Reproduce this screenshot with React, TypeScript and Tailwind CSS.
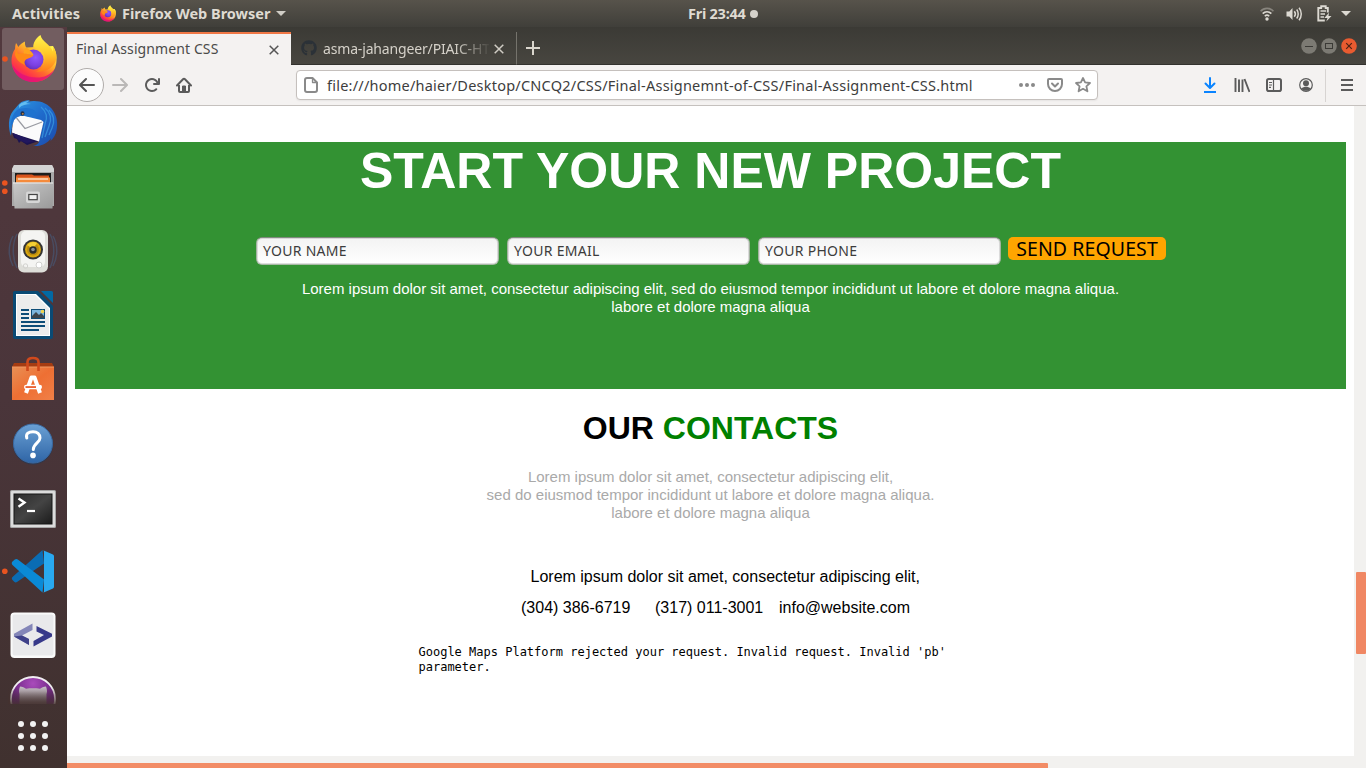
import React from "react";
import { FaGithub } from "react-icons/fa";

const UI = "font-['Noto_Sans','Open_Sans',sans-serif]";

function FirefoxLogo({ id, className }: { id: string; className: string }) {
  return (
    <svg viewBox="0 0 46 48" className={className}>
      <defs>
        <linearGradient id={`${id}-body`} x1="0.85" y1="0.1" x2="0.2" y2="0.95">
          <stop offset="0.05" stopColor="#fff44f" />
          <stop offset="0.35" stopColor="#ffb02a" />
          <stop offset="0.58" stopColor="#ff6a2e" />
          <stop offset="0.8" stopColor="#ff3647" />
          <stop offset="1" stopColor="#e31587" />
        </linearGradient>
        <radialGradient id={`${id}-globe`} cx="0.6" cy="0.4" r="0.7">
          <stop offset="0" stopColor="#9059ff" />
          <stop offset="0.6" stopColor="#7a3fe0" />
          <stop offset="1" stopColor="#5b2bb0" />
        </radialGradient>
        <linearGradient id={`${id}-flame`} x1="0.5" y1="0" x2="0.5" y2="1">
          <stop offset="0" stopColor="#fff44f" />
          <stop offset="0.5" stopColor="#ffc928" />
          <stop offset="1" stopColor="#ff7a1c" />
        </linearGradient>
      </defs>
      <path
        d="M23 47C10 47 .5 37.500.5 25.500c0-5 1.500-8.500 3.500-11.500 0-2 .3-4 1-6 .9 1 1.700 2.300 2.200 4C9 9.500 11.500 7.500 14 6.500c-.3 2 .2 4.500 1.300 6L25 12l17-1c3 5 4 10 3.500 15C45 38 35 47 23 47z"
        fill={`url(#${id}-body)`}
      />
      <path
        d="M1 29c2 11 10 18 22 18 9 0 17-5 21-13-5 6-11 8.500-18 8.500C15 42.500 6 38 1 29z"
        fill="#e2107a"
        opacity="0.75"
      />
      <circle cx="22.500" cy="24.500" r="10" fill={`url(#${id}-globe)`} />
      <path
        d="M29.500 0c-5 3.500-7.500 8-7.200 12.500 5.500-.3 10.500 3.500 11.500 9.500 1 7-3 13-9 14.500 10 1 19-4 20.500-13 .6-5-1-9-3.300-12 .2 2 .2 3.300 0 5C39 9 31 7 29.500 0z"
        fill={`url(#${id}-flame)`}
      />
      <path
        d="M7 12c-1 3-1 5 .2 7 2.500-1 5-1 8-.4 3 .5 5 1.600 7.300 1.400-.5 2.500-6 3-8 5-1.500 1.500-1 4-.5 5.500C11 28 6 27 4 20c0-3 1-6 3-8z"
        fill="#ff8a16"
      />
      <path d="M15.300 12.500c-2 1.500-3 4-2.500 6 3 .2 6 1.700 9.700 1.500-1-3-3.500-4.500-7.200-7.500z" fill="#ffa41e" />
    </svg>
  );
}

function Cell({ children, dots = 0 }: { children: React.ReactNode; dots?: number }) {
  return (
    <svg viewBox="0 0 67 64" className="block h-16 w-[67px] shrink-0">
      {dots === 1 && <circle cx="4.800" cy="32.200" r="2.800" fill="#e95420" />}
      {dots === 2 && (
        <>
          <circle cx="4.800" cy="28" r="2.800" fill="#e95420" />
          <circle cx="4.800" cy="36.200" r="2.800" fill="#e95420" />
        </>
      )}
      {children}
    </svg>
  );
}

function Thunderbird() {
  return (
    <Cell>
      <defs>
        <linearGradient id="tb" x1="0" y1="0" x2="1" y2="1">
          <stop offset="0" stopColor="#2f9be4" />
          <stop offset="0.5" stopColor="#1f6acb" />
          <stop offset="1" stopColor="#1c4bab" />
        </linearGradient>
      </defs>
      <path d="M11 38l3 9 3 1 2 4 2-2 6 4 12-4z" fill="#1c1450" />
      <path
        d="M19 13c3-3 7-4 11-4l-2 1.500c10-2 20 1 25 9 4 6 5 13 3.500 20-.7 4-3 8-6 10.500l.5-3c-3 5-9 8.500-18 8 3-.6 5-2 6-4l4-20-26-8-5 12-1 10C8 37 8 26 13 20z"
        fill="url(#tb)"
      />
      <path d="M15.500 26l7-1.500L41 29l2.500 2L39 50.500 12 42c0-6 1-12 3.500-16z" fill="#fbfbfb" />
      <path d="M16.500 27L25 37.500l17-6.500" fill="none" stroke="#999ba2" strokeWidth="1.200" />
      <path d="M12 41.500l22 9-7 1.500c-6-1-12-5-15-10.500z" fill="#21175e" />
      <path
        d="M41 16c6 5 7 10 4 17l-3 14M45 17c6 5 7 11 4 18l-4 11M49 19c5 5 6 11 3 18l-3 7"
        fill="none"
        stroke="#3c9ee2"
        strokeWidth="1.300"
        opacity="0.7"
      />
      <path d="M17 19c4-2 9-3 15-1 4 2 5 4 3 6-3 2-6 2-9 1-5-1-9 0-12 4-1 2-2 4-3 7-.5-7 2-13 6-17z" fill="#1f72cf" />
      <path d="M19 14c3-3 7-4 10-4l-3 2 5 1c-5 0-9 1-12 4z" fill="#63bdf0" />
      <ellipse cx="22.500" cy="22.500" rx="2" ry="2.300" fill="#26324c" />
      <circle cx="22.800" cy="22.800" r="0.900" fill="#c98a3e" />
    </Cell>
  );
}

function Files() {
  return (
    <Cell dots={2}>
      <defs>
        <linearGradient id="fl" x1="0" y1="0" x2="1" y2="1">
          <stop offset="0" stopColor="#c9c9c9" />
          <stop offset="1" stopColor="#999" />
        </linearGradient>
      </defs>
      <g transform="translate(0 -1)">
        <path d="M14 11h38l2 4v37H12V15z" fill="#a9a9a9" />
        <path d="M14 11h38l2 4v3H12v-3z" fill="#d4d4d4" />
        <rect x="15" y="19" width="36" height="10" fill="#1d1d1d" />
        <path d="M17 20.500h15l2 1h15V29H16v-7z" fill="#d9541e" />
        <path d="M16 23.500h34V29H16z" fill="#f58b3c" />
        <path d="M18 25h30" stroke="#fff" strokeWidth="1" />
        <path d="M13 28.500h41l-1.500 26h-38z" fill="url(#fl)" />
        <path d="M13 29h40" stroke="#eee" strokeWidth="1" />
        <rect x="26" y="37.500" width="14" height="11.500" rx="2" fill="#d6d6d6" />
        <rect x="28.800" y="40.500" width="8.400" height="5.200" fill="#f0f0f0" stroke="#444" strokeWidth="1.200" />
      </g>
    </Cell>
  );
}

function Rhythmbox() {
  return (
    <Cell>
      <g fill="none" stroke="#45668f" strokeWidth="1.500" opacity="0.45">
        <path d="M17 15c-5 9-5 24 0 34M13 17c-5 9-5 21 0 30M50 15c5 9 5 24 0 34M53 17c5 9 5 21 0 30" />
      </g>
      <rect x="18" y="11" width="30" height="42.500" rx="6" fill="#deded9" />
      <rect x="21" y="12" width="24" height="36" rx="5" fill="#f4f4f2" />
      <circle cx="33" cy="30.500" r="10" fill="#343434" />
      <circle cx="33" cy="30.500" r="8" fill="#d9a60e" />
      <circle cx="33" cy="30.500" r="6" fill="#b88b10" />
      <path d="M27 26a8 8 0 0 1 10-2l-4 6z" fill="#f3cf36" />
      <circle cx="33" cy="31" r="3.700" fill="#292b2d" />
      <circle cx="33" cy="30.500" r="1.800" fill="#8c9297" />
      <circle cx="25.500" cy="47" r="2.200" fill="none" stroke="#d2d2cf" />
      <circle cx="39" cy="46" r="3" fill="#fff" stroke="#d0d0ce" />
    </Cell>
  );
}

function Writer() {
  return (
    <Cell>
      <path d="M14 8h24l15 15v31a2 2 0 0 1-2 2H15a2 2 0 0 1-2-2V9.500z" fill="#0a4a74" />
      <path d="M16 11h20l14 14v28H16z" fill="#fff" />
      <path d="M17 12h18l14 14v26H17z" fill="#ececec" />
      <path d="M41 8h10.500a1.500 1.500 0 0 1 1.500 1.500V20z" fill="#0369a3" />
      <g fill="#0d4c77">
        <path d="M21 26h8v2h-8zM21 30h8v2h-8zM21 34h8v2h-8zM21 38h24v2H21zM21 42h24v2H21zM21 46h18v2H21z" />
        <rect x="31" y="26" width="14" height="10" />
      </g>
      <rect x="32" y="27" width="12" height="8" fill="#7bb5dd" />
      <circle cx="42.500" cy="28.500" r="1.800" fill="#f3d34a" />
      <path d="M32 35v-2l4-4 3 3 2-2 3 3v2z" fill="#3d454b" />
    </Cell>
  );
}

function Software() {
  return (
    <Cell>
      <defs>
        <linearGradient id="sw" x1="0" y1="0" x2="1" y2="1">
          <stop offset="0" stopColor="#e99055" />
          <stop offset="0.5" stopColor="#ee6f33" />
          <stop offset="1" stopColor="#f08048" />
        </linearGradient>
      </defs>
      <path d="M14 16h38l2 4H12z" fill="#a53c12" />
      <path d="M12 20h42v33H12z" fill="url(#sw)" />
      <path d="M12 20h42" stroke="#f19a65" />
      <path d="M27.500 24V15c0-3 2-4 5.500-4s5.500 1 5.500 4v9" fill="none" stroke="#d0491c" strokeWidth="2.600" />
      <path d="M26 46l5.500-15.500h3L40 46" fill="none" stroke="#fff" strokeWidth="4" strokeLinejoin="round" />
      <rect x="24" y="37.700" width="18" height="4.600" rx="2.300" fill="#fff" />
      <rect x="25.500" y="39.200" width="10.500" height="1.700" fill="#e95420" />
    </Cell>
  );
}

function Help() {
  return (
    <Cell>
      <defs>
        <linearGradient id="hp" x1="0" y1="0" x2="0" y2="1">
          <stop offset="0" stopColor="#6aa0d4" />
          <stop offset="1" stopColor="#2f65a6" />
        </linearGradient>
      </defs>
      <circle cx="33" cy="33.500" r="20" fill="#223b5c" opacity="0.6" />
      <circle cx="33" cy="32.500" r="19.500" fill="url(#hp)" stroke="#3a6aa2" />
      <path
        d="M26.800 27c-1.300-4.500 2-6.200 6.200-6.200s7 2.400 7 6.200c0 4.500-6.700 5.500-6.700 11.500"
        fill="none"
        stroke="#fff"
        strokeWidth="3"
        strokeLinecap="round"
      />
      <circle cx="33" cy="44.400" r="2.800" fill="#fff" />
    </Cell>
  );
}

function Terminal() {
  return (
    <Cell>
      <defs>
        <linearGradient id="tm" x1="0" y1="0" x2="1" y2="1">
          <stop offset="0" stopColor="#2c2c2c" />
          <stop offset="0.5" stopColor="#444" />
          <stop offset="1" stopColor="#1c1c1c" />
        </linearGradient>
      </defs>
      <rect x="10" y="15" width="46" height="38" rx="1.500" fill="#a6a6a6" />
      <rect x="11" y="16" width="44" height="36" rx="1" fill="#dcdcdc" />
      <rect x="13.500" y="18.500" width="39" height="31" fill="#151515" />
      <rect x="14.500" y="19.500" width="37" height="29" fill="url(#tm)" />
      <path d="M18.500 23.500l6 4-6 4.300" fill="none" stroke="#fff" strokeWidth="2.400" />
      <path d="M27 36h8" stroke="#fff" strokeWidth="2.200" />
    </Cell>
  );
}

function VsCode() {
  return (
    <Cell dots={1}>
      <path d="M12.500 38L42.500 11l1.500 13.500L17 43c-1 .7-2 .5-2.800-.3L12.500 41c-.9-1-.9-2.100 0-3z" fill="#0a6cb4" />
      <path d="M12.500 22.500l2.300-2c1-.7 2-.8 3 0L44 40.500l-1.500 13L12.500 26c-1-1-1-2.400 0-3.500z" fill="#0a8ad6" />
      <path d="M42.500 11l10.500 4.500a2 2 0 0 1 1 1.800v30.400a2 2 0 0 1-1 1.800L42.500 54c1 0 1.500-.6 1.500-2V13c0-1.300-.5-2-1.500-2z" fill="#29a9f0" />
    </Cell>
  );
}

function Brackets() {
  return (
    <Cell>
      <rect x="10.500" y="9.500" width="45" height="45.500" rx="4" fill="#fafafa" />
      <rect x="12.500" y="11.500" width="41" height="41" rx="2" fill="#e9e9eb" />
      <path d="M32.500 20.500v6.500L22 32.500l7 3.500v6L14 33.500v-2.800z" fill="#8486b8" />
      <path d="M22 32.500l7 3.500v6L14 33.500z" fill="#3f4189" />
      <path d="M36.500 23l15.500 7.800v2.600L33.500 43.500V38L44 32l-7.500-3.500z" fill="#37398a" />
    </Cell>
  );
}

function GithubDesktop() {
  return (
    <Cell>
      <defs>
        <radialGradient id="gh" cx="0.5" cy="0.15" r="0.55">
          <stop offset="0" stopColor="#a94bbb" />
          <stop offset="1" stopColor="#64207a" />
        </radialGradient>
        <linearGradient id="cat" x1="0" y1="24" x2="0" y2="38" gradientUnits="userSpaceOnUse">
          <stop offset="0" stopColor="#c4bcc4" />
          <stop offset="0.8" stopColor="#75696c" />
        </linearGradient>
        <linearGradient id="ghfade" x1="0" y1="20" x2="0" y2="38" gradientUnits="userSpaceOnUse">
          <stop offset="0" stopColor="#44312f" stopOpacity="0" />
          <stop offset="1" stopColor="#44312f" stopOpacity="0.900" />
        </linearGradient>
      </defs>
      <circle cx="33" cy="32" r="22" fill="url(#gh)" stroke="#f1eef2" strokeWidth="1.800" />
      <path d="M19.500 38V27c-.8-2-.7-4.500.5-7.500 2.500 0 4.500 1 6 2.300 4-.6 10-.6 14 0 1.500-1.300 3.500-2.300 6-2.300 1.200 3 1.300 5.500.5 7.500v11z" fill="url(#cat)" />
      <rect x="8" y="8" width="50" height="30" fill="url(#ghfade)" />
    </Cell>
  );
}

function Dock() {
  return (
    <nav className="flex w-[67px] shrink-0 flex-col bg-linear-to-b from-[#52393e] via-[#4a353a] to-[#40312f]">
      <div className="flex h-[677px] flex-col overflow-hidden">
        <div className="flex h-16 w-[67px] shrink-0 items-center">
          <div className="ml-[2px] flex h-[62px] w-[62px] items-center rounded-[3px] bg-[#725d60]">
            <svg viewBox="0 0 8 8" className="-ml-[1px] h-2 w-2 shrink-0">
              <circle cx="4" cy="4" r="2.800" fill="#e95420" />
            </svg>
            <FirefoxLogo id="dockff" className="ml-[2px] h-12 w-[46px] shrink-0" />
          </div>
        </div>
        <Thunderbird />
        <Files />
        <Rhythmbox />
        <Writer />
        <Software />
        <Help />
        <Terminal />
        <VsCode />
        <Brackets />
        <GithubDesktop />
      </div>
      <svg viewBox="0 0 67 64" className="block h-16 w-[67px]">
        {[20, 32, 44].map((y) =>
          [21, 33, 45].map((x) => <circle key={`${x}-${y}`} cx={x} cy={y} r="3" fill="#f2f2f2" />)
        )}
      </svg>
    </nav>
  );
}

function TopBar() {
  return (
    <header
      className={`flex h-[27px] shrink-0 items-center bg-linear-to-b from-[#57534b] to-[#403f3a] text-[14.500px] leading-[26px] font-bold text-[#dfdbd2] ${UI}`}
    >
      <div className="flex w-[688px] shrink-0 items-center">
        <span className="ml-3 w-[88px] pb-[2px] whitespace-nowrap tracking-[0.07px]">Activities</span>
        <FirefoxLogo id="topff" className="h-[17px] w-4" />
        <span className="ml-[6px] w-[154px] pb-[2px] whitespace-nowrap">Firefox Web Browser</span>
        <svg viewBox="0 0 10 5" className="h-[5px] w-[10px]">
          <path d="M0 0h10L5 5z" fill="#d0cdc6" />
        </svg>
      </div>
      <div className="flex items-center">
        <span className="w-[62px] pb-[2px] whitespace-nowrap tracking-[-0.250px]">Fri 23:44</span>
        <span className="h-2 w-2 rounded-full bg-[#d5d2cb]" />
      </div>
      <div className="flex flex-1 items-center justify-end pr-[15px]">
        <svg viewBox="0 0 14 14" className="h-[14px] w-[14px]" fill="none" stroke="#dcd9d2">
          <path d="M.6 4.300C4 .4 10 .4 13.400 4.300" strokeWidth="1.600" opacity="0.4" />
          <path d="M2.700 6.700c2.400-2.600 6.200-2.600 8.600 0" strokeWidth="1.700" />
          <path d="M4.800 9.200c1.300-1.300 3.100-1.300 4.400 0" strokeWidth="1.600" />
          <circle cx="7" cy="12" r="1.700" fill="#dcd9d2" stroke="none" />
        </svg>
        <svg viewBox="0 0 16 14" className="ml-3 h-[14px] w-4" fill="none" stroke="#dcd9d2" strokeWidth="1.500">
          <path d="M.5 4.500h2.800L6.500 1v12L3.300 9.500H.5z" fill="#dcd9d2" stroke="none" />
          <path d="M8.300 4.300c1.300 1.600 1.300 3.800 0 5.400M10.700 2.500c2 2.500 2 6.500 0 9M13 .8c3 3.500 3 9 0 12.400" />
        </svg>
        <svg viewBox="0 0 15 17" className="ml-[15px] h-[17px] w-[15px]" fill="none" stroke="#dcd9d2">
          <path d="M10.800 7.500V3H8.700V1.200H4.200V3H1.300v12.500h6.500" strokeWidth="1.900" />
          <path d="M3.500 6h5.500M3.500 9h4.500M3.500 12h3.500" strokeWidth="1.400" />
          <path d="M12 7.800L7.300 13h3.200l-1.200 3.500 5.200-5.500h-3z" fill="#dcd9d2" stroke="none" />
        </svg>
        <svg viewBox="0 0 10 5" className="ml-[9px] h-[5px] w-[10px]">
          <path d="M0 0h10L5 5z" fill="#dcd9d2" />
        </svg>
      </div>
    </header>
  );
}

function CloseX({ className }: { className: string }) {
  return (
    <svg viewBox="0 0 10 10" className={`h-[10px] w-[10px] shrink-0 ${className}`} fill="none" stroke="currentColor" strokeWidth="1.500">
      <path d="M.7.7l8.600 8.600M9.300.7L.7 9.300" />
    </svg>
  );
}

function TabStrip() {
  return (
    <div className={`flex h-[38px] shrink-0 items-end bg-linear-to-b from-[#3b3a35] to-[#484640] pt-[5px] text-[14px] ${UI}`}>
      <div className="flex h-[33px] w-[224px] items-center border-t-2 border-[#f07746] bg-[#f4f2f1] pl-[9px] text-[#4a4a4a]">
        <span className="w-[193px] pb-[2px] whitespace-nowrap tracking-[0.1px]">Final Assignment CSS</span>
        <CloseX className="text-[#555]" />
      </div>
      <div className="flex h-[33px] w-[226px] items-center border-r border-b border-r-[#75736c] border-b-[#33322e] pl-[10px] text-[#d5d1c9]">
        <FaGithub className="h-4 w-4 shrink-0 text-[#2b3137]" />
        <span className="ml-[6px] w-[166px] shrink-0 whitespace-nowrap tracking-[-0.160px] [mask-image:linear-gradient(to_right,#000_132px,transparent_168px)]">
          asma-jahangeer/PIAIC-HT
        </span>
        <CloseX className="mt-px ml-[5px] text-[#d0ccc4]" />
      </div>
      <div className="flex h-[33px] flex-1 items-center border-b border-[#33322e] pl-[9px]">
        <svg viewBox="0 0 14 14" className="h-[14px] w-[14px]">
          <path d="M7 0v14M0 7h14" stroke="#dad6cd" strokeWidth="2" />
        </svg>
        <div className="mr-[9px] mb-[5px] ml-auto flex gap-1">
          <svg viewBox="0 0 16 16" className="h-4 w-4">
            <circle cx="8" cy="8" r="7.800" fill="#7c7a73" />
            <path d="M4 8.500h8" stroke="#3b3a36" />
          </svg>
          <svg viewBox="0 0 16 16" className="h-4 w-4">
            <circle cx="8" cy="8" r="7.800" fill="#7c7a73" />
            <rect x="4.500" y="5.500" width="7" height="5" fill="none" stroke="#3b3a36" />
          </svg>
          <svg viewBox="0 0 16 16" className="h-4 w-4">
            <circle cx="8" cy="8" r="7.800" fill="#e95b30" />
            <path d="M5.200 5.200l5.600 5.600M10.800 5.200l-5.600 5.600" stroke="#4d2214" strokeWidth="1.200" />
          </svg>
        </div>
      </div>
    </div>
  );
}

function Tool({ children, className = "" }: { children: React.ReactNode; className?: string }) {
  return (
    <span className={`flex w-8 shrink-0 items-center justify-center ${className}`}>
      <svg viewBox="0 0 16 16" className="h-4 w-4" fill="none" stroke="currentColor" strokeWidth="2">
        {children}
      </svg>
    </span>
  );
}

function Toolbar() {
  return (
    <div className="flex h-[41px] shrink-0 items-center border-b border-[#c5c1be] bg-[#f4f2f1] pl-[3px] text-[#5b5b5b]">
      <span className="flex h-[34px] w-[34px] items-center justify-center rounded-full border border-[#b0acaa] bg-[#fcfcfc]">
        <svg viewBox="0 0 16 16" className="h-4 w-4" fill="none" stroke="#555" strokeWidth="2" strokeLinecap="round" strokeLinejoin="round">
          <path d="M15 8H1.500M7 2L1 8l6 6" />
        </svg>
      </span>
      <Tool className="text-[#bab8b7]">
        <path d="M1 8h13.500M9 2l6 6-6 6" strokeLinecap="round" strokeLinejoin="round" />
      </Tool>
      <Tool>
        <path
          d="M15 1a1 1 0 0 0-1 1v2.418A6.995 6.995 0 1 0 8 15a6.954 6.954 0 0 0 4.950-2.050 1 1 0 0 0-1.414-1.414A5.019 5.019 0 1 1 12.549 6H10a1 1 0 0 0 0 2h5a1 1 0 0 0 1-1V2a1 1 0 0 0-1-1z"
          fill="currentColor"
          stroke="none"
        />
      </Tool>
      <Tool>
        <path d="M1 8.500l6-6.300a1.400 1.400 0 0 1 2 0l6 6.300" strokeLinecap="round" />
        <path d="M3 8v6a1 1 0 0 0 1 1h8a1 1 0 0 0 1-1V8" />
        <path d="M6.500 14V9h3v5z" fill="currentColor" strokeWidth="1" />
      </Tool>
      <div className="ml-24 flex h-[30px] w-[802px] shrink-0 items-center rounded-[4px] border border-[#c5c0bd] bg-white pl-[6px] text-[#8a8a8a] shadow-[0_1px_2px_rgba(0,0,0,0.06)]">
        <svg viewBox="0 0 16 16" className="h-4 w-4 shrink-0" fill="none" stroke="currentColor" strokeWidth="2" strokeLinejoin="round">
          <path d="M9.500 1H4a2 2 0 0 0-2 2v10a2 2 0 0 0 2 2h8a2 2 0 0 0 2-2V5.500z" />
          <path d="M9.500 1v4.500H14" strokeWidth="1.300" />
        </svg>
        <span className={`ml-[8px] w-[692px] shrink-0 pt-px whitespace-nowrap text-[14.500px] tracking-[0.230px] text-[#3d3d3d] ${UI}`}>
          file:///home/haier/Desktop/CNCQ2/CSS/Final-Assignemnt-of-CSS/Final-Assignment-CSS.html
        </span>
        <div className="flex gap-3">
          <svg viewBox="0 0 16 16" className="h-4 w-4" fill="currentColor">
            <circle cx="2" cy="8" r="2" />
            <circle cx="8" cy="8" r="2" />
            <circle cx="14" cy="8" r="2" />
          </svg>
          <svg viewBox="0 0 16 16" className="h-4 w-4" fill="none" stroke="currentColor" strokeWidth="2" strokeLinecap="round" strokeLinejoin="round">
            <path d="M2 2h12a1 1 0 0 1 1 1v4a7 7 0 0 1-14 0V3a1 1 0 0 1 1-1z" />
            <path d="M5 6.500l3 3 3-3" />
          </svg>
          <svg viewBox="0 0 16 16" className="h-4 w-4" fill="none" stroke="currentColor" strokeWidth="1.800" strokeLinejoin="round">
            <path d="M8 1l2.100 4.400 4.900.6-3.600 3.300 1 5L8 11.800l-4.400 2.500 1-5L1 6l4.900-.6z" />
          </svg>
        </div>
      </div>
      <Tool className="ml-24 text-[#0a84ff]">
        <path d="M8 1v9.500M3.500 6.500L8 11l4.500-4.500" strokeLinecap="round" strokeLinejoin="round" />
        <path d="M2 15h12" />
      </Tool>
      <Tool>
        <path d="M1.500 1v14M5 2.500V15M8.500 2.500V15M10.500 2l5 13" strokeWidth="1.900" />
      </Tool>
      <Tool>
        <rect x="1" y="2" width="14" height="12" rx="1.800" />
        <path d="M7.500 2v12M3 5.500h3M3 8h3M3 10.300h2" strokeWidth="1.200" />
      </Tool>
      <Tool>
        <circle cx="8" cy="8" r="6.300" strokeWidth="1.200" />
        <circle cx="8" cy="6.200" r="3" fill="currentColor" stroke="none" />
        <path d="M3.200 11.500c1.500-1.300 3-1.800 4.800-1.800s3.300.5 4.800 1.800C11.700 13 10 13.800 8 13.800s-3.700-.8-4.800-2.300z" fill="currentColor" stroke="none" />
      </Tool>
      <span className="ml-[3px] h-[33px] w-px bg-[#d7d4d2]" />
      <Tool className="ml-[5px]">
        <path d="M2 3h12M2 8h12M2 13h12" />
      </Tool>
    </div>
  );
}

function Field({ label }: { label: string }) {
  return (
    <div
      className={`flex h-7 w-[243px] items-center rounded-[6px] border border-t-[#7f8a7d] border-r-[#a3b3a0] border-b-[#a9b9a6] border-l-[#a3b3a0] bg-linear-to-b from-[#f3f3f3] to-white pb-[2px] pl-[6px] text-[14px] tracking-[0.300px] whitespace-nowrap text-[#3c3c3c] shadow-[inset_0_0_0_1px_rgba(160,160,160,0.35)] ${UI}`}
    >
      {label}
    </div>
  );
}

function Page() {
  return (
    <main className="flex-1 overflow-hidden bg-white px-2 pt-9 font-['Liberation_Sans',Arial,sans-serif] text-black">
      <section className="h-[247px] bg-[#339233] pt-px text-center text-white">
        <h1 className="text-[50px] leading-[57px] font-bold">START YOUR NEW PROJECT</h1>
        <form className="mt-[37px] flex items-start justify-center pl-px">
          <div className="mr-[7px] flex gap-2">
            <Field label="YOUR NAME" />
            <Field label="YOUR EMAIL" />
            <Field label="YOUR PHONE" />
          </div>
          <span
            className={`flex h-[23px] w-[158px] items-center justify-center rounded-[5px] bg-[#ffa500] text-[19.500px] leading-[23px] tracking-[0.100px] whitespace-nowrap text-black ${UI}`}
          >
            SEND REQUEST
          </span>
        </form>
        <p className="mt-[15px] text-[15px] leading-[18px]">
          Lorem ipsum dolor sit amet, consectetur adipiscing elit, sed do eiusmod tempor incididunt ut labore et dolore magna aliqua.
          <br />
          labore et dolore magna aliqua
        </p>
      </section>
      <h2 className="mt-[21px] text-center text-[32px] leading-[37px] font-bold">
        OUR <span className="text-[#008000]">CONTACTS</span>
      </h2>
      <p className="mt-[21px] text-center text-[15px] leading-[18px] text-[#a9a9a9]">
        Lorem ipsum dolor sit amet, consectetur adipiscing elit,
        <br />
        sed do eiusmod tempor incididunt ut labore et dolore magna aliqua.
        <br />
        labore et dolore magna aliqua
      </p>
      <p className="mt-[46px] pl-[455.500px] text-[16px] leading-[18px]">Lorem ipsum dolor sit amet, consectetur adipiscing elit,</p>
      <div className="mt-[13px] flex pl-[446px] text-[16px] leading-[18px] whitespace-nowrap">
        <span className="w-[134px]">(304) 386-6719</span>
        <span className="w-[124px]">(317) 011-3001</span>
        <span>info@website.com</span>
      </div>
      <p className="mt-[28px] pl-[343.500px] font-['DejaVu_Sans_Mono',monospace] text-[12px] leading-[15px]">
        Google Maps Platform rejected your request. Invalid request. Invalid 'pb'
        <br />
        parameter.
      </p>
    </main>
  );
}

export default function App() {
  return (
    <div className="flex h-[768px] w-[1366px] flex-col overflow-hidden bg-[#403f3a]">
      <TopBar />
      <div className="flex min-h-0 flex-1">
        <Dock />
        <div className="flex min-w-0 flex-1 flex-col">
          <TabStrip />
          <Toolbar />
          <div className="flex h-[650px] shrink-0">
            <Page />
            <div className="w-3 bg-[#f2f1ef] pt-[466px] pl-[2px]">
              <div className="h-[82px] rounded-[1px] bg-[#f08763]" />
            </div>
          </div>
          <div className="h-3 bg-[#f2f1ef] pt-[7px]">
            <div className="h-[5px] w-[981px] rounded-tr-[1px] bg-[#f28c66]" />
          </div>
        </div>
      </div>
    </div>
  );
}
